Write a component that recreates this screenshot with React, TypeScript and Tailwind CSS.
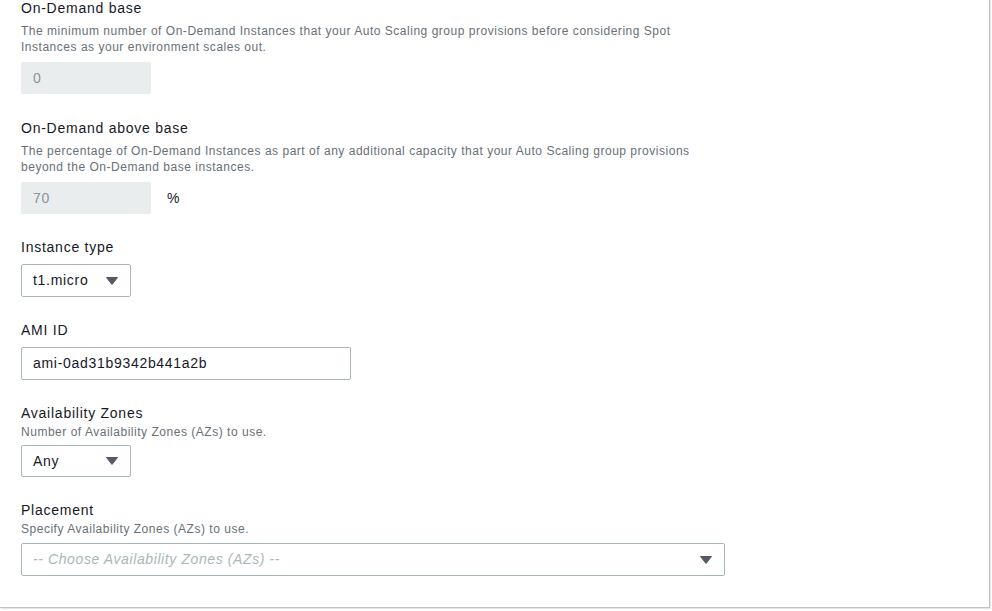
import React from "react";

function Caret() {
  return (
    <svg width="12" height="8" viewBox="0 0 12 8" className="shrink-0">
      <path d="M0.5 0.5 L11.5 0.5 L6 7.5 Z" fill="#545b64" stroke="#545b64" strokeWidth="1" strokeLinejoin="round" />
    </svg>
  );
}

function Heading({ children, className = "" }: { children: React.ReactNode; className?: string }) {
  return <div className={`text-[14px] leading-[20px] tracking-[0.75px] text-[#16191f] ${className}`}>{children}</div>;
}

function Desc({ children, className = "" }: { children: React.ReactNode; className?: string }) {
  return <p className={`text-[12px] leading-[16px] tracking-[0.52px] text-[#687078] ${className}`}>{children}</p>;
}

function Select({ value, width, placeholder }: { value: string; width: string; placeholder?: boolean }) {
  return (
    <div
      className={`${width} flex items-center justify-between rounded-[2px] border border-[#aab7b8] bg-white pl-[11px] pr-[12px]`}
    >
      <span
        className={
          placeholder
            ? "text-[14px] italic tracking-[0.6px] text-[#aab7b8]"
            : "text-[14px] tracking-[0.7px] text-[#16191f]"
        }
      >
        {value}
      </span>
      <Caret />
    </div>
  );
}

export default function App() {
  return (
    <main className="h-[611px] w-[992px] overflow-hidden bg-white font-['Liberation_Sans',Arial,sans-serif]">
      <div className="h-[610px] w-[990px] border-r border-b border-[#bfc4c4] shadow-[1px_1px_0_0_#e6e8e8]">
        <div className="pl-[21px]">
          <section className="-mt-[2px]">
            <Heading>On-Demand base</Heading>
            <Desc className="mt-[5px]">
              The minimum number of On-Demand Instances that your Auto Scaling group provisions before considering Spot
              <br />
              Instances as your environment scales out.
            </Desc>
            <div className="mt-[7px] flex h-[32px] w-[130px] items-center rounded-[2px] bg-[#eaeded] px-[12px] text-[14px] text-[#879596]">
              0
            </div>
          </section>

          <section className="mt-[24px]">
            <Heading>On-Demand above base</Heading>
            <Desc className="mt-[5px]">
              The percentage of On-Demand Instances as part of any additional capacity that your Auto Scaling group provisions
              <br />
              beyond the On-Demand base instances.
            </Desc>
            <div className="mt-[7px] flex items-center gap-[16px]">
              <div className="flex h-[32px] w-[130px] items-center rounded-[2px] bg-[#eaeded] px-[12px] text-[14px] tracking-[0.7px] text-[#879596]">
                70
              </div>
              <span className="text-[14px] text-[#16191f]">%</span>
            </div>
          </section>

          <section className="mt-[23px]">
            <Heading>Instance type</Heading>
            <div className="mt-[7px] h-[33px] flex">
              <Select value="t1.micro" width="w-[110px]" />
            </div>
          </section>

          <section className="mt-[23px]">
            <Heading>AMI ID</Heading>
            <div className="mt-[7px] flex h-[33px] w-[330px] items-center rounded-[2px] border border-[#aab7b8] bg-white px-[11px] text-[14px] tracking-[0.7px] text-[#16191f]">
              ami-0ad31b9342b441a2b
            </div>
          </section>

          <section className="mt-[23px]">
            <Heading>Availability Zones</Heading>
            <Desc className="mt-[1px]">Number of Availability Zones (AZs) to use.</Desc>
            <div className="mt-[5px] h-[32px] flex">
              <Select value="Any" width="w-[110px]" />
            </div>
          </section>

          <section className="mt-[23px]">
            <Heading>Placement</Heading>
            <Desc className="mt-[1px]">Specify Availability Zones (AZs) to use.</Desc>
            <div className="mt-[6px] h-[33px] flex">
              <Select value="-- Choose Availability Zones (AZs) --" width="w-[704px]" placeholder />
            </div>
          </section>
        </div>
      </div>
    </main>
  );
}
